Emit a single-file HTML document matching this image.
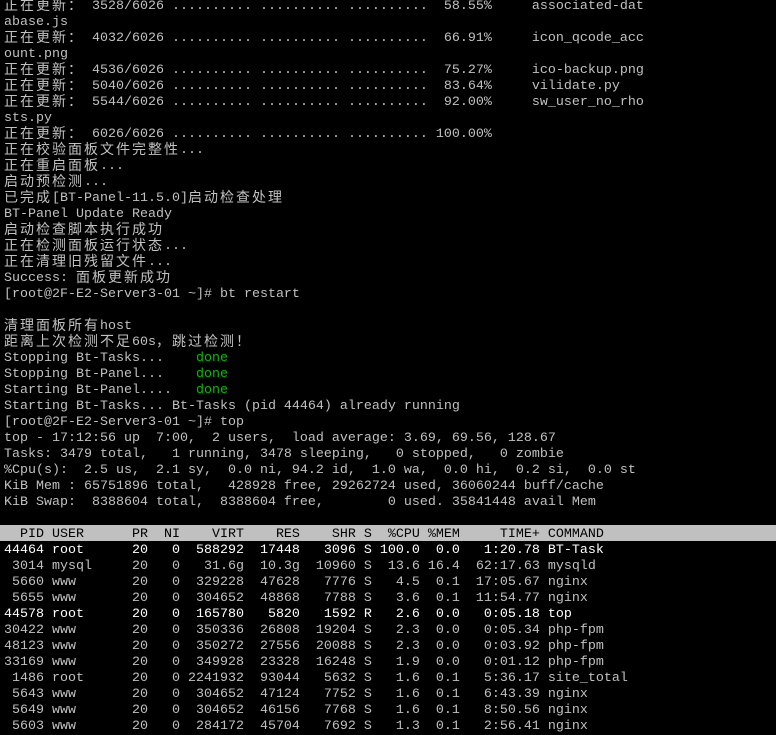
<!DOCTYPE html>
<html><head><meta charset="utf-8"><style>
html,body{margin:0;padding:0;background:#000;width:776px;height:731px;overflow:hidden}
#t{position:absolute;left:4px;top:-3px;font-family:"Liberation Mono",monospace;font-size:13.33px;color:#c0c0c0;}
#t div{height:14px;padding-top:2px;line-height:16px;white-space:pre;overflow:visible}
.c{font-family:"Noto Sans CJK SC","WenQuanYi Zen Hei",sans-serif;font-size:14px;letter-spacing:2px;line-height:15px;display:inline-block;height:16px;vertical-align:top;margin-top:-1px}
.g{color:#00c000}
.w{color:#fff}
.h{background:#c0c0c0;color:#000;margin-left:-4px;padding-left:4px;width:772px}
</style></head><body><div id="t">
<div><span class="c">正在更新：</span> 3528/6026 .......... .......... ..........  58.55%     associated-dat</div>
<div>abase.js</div>
<div><span class="c">正在更新：</span> 4032/6026 .......... .......... ..........  66.91%     icon_qcode_acc</div>
<div>ount.png</div>
<div><span class="c">正在更新：</span> 4536/6026 .......... .......... ..........  75.27%     ico-backup.png</div>
<div><span class="c">正在更新：</span> 5040/6026 .......... .......... ..........  83.64%     vilidate.py</div>
<div><span class="c">正在更新：</span> 5544/6026 .......... .......... ..........  92.00%     sw_user_no_rho</div>
<div>sts.py</div>
<div><span class="c">正在更新：</span> 6026/6026 .......... .......... .......... 100.00%</div>
<div><span class="c">正在校验面板文件完整性</span>...</div>
<div><span class="c">正在重启面板</span>...</div>
<div><span class="c">启动预检测</span>...</div>
<div><span class="c">已完成</span>[BT-Panel-11.5.0]<span class="c">启动检查处理</span></div>
<div>BT-Panel Update Ready</div>
<div><span class="c">启动检查脚本执行成功</span></div>
<div><span class="c">正在检测面板运行状态</span>...</div>
<div><span class="c">正在清理旧残留文件</span>...</div>
<div>Success: <span class="c">面板更新成功</span></div>
<div>[root@2F-E2-Server3-01 ~]# bt restart</div>
<div> </div>
<div><span class="c">清理面板所有</span>host</div>
<div><span class="c">距离上次检测不足</span>60s<span class="c">，跳过检测！</span></div>
<div>Stopping Bt-Tasks...    <span class="g">done</span></div>
<div>Stopping Bt-Panel...    <span class="g">done</span></div>
<div>Starting Bt-Panel....   <span class="g">done</span></div>
<div>Starting Bt-Tasks... Bt-Tasks (pid 44464) already running</div>
<div>[root@2F-E2-Server3-01 ~]# top</div>
<div>top - 17:12:56 up  7:00,  2 users,  load average: 3.69, 69.56, 128.67</div>
<div>Tasks: 3479 total,   1 running, 3478 sleeping,   0 stopped,   0 zombie</div>
<div>%Cpu(s):  2.5 us,  2.1 sy,  0.0 ni, 94.2 id,  1.0 wa,  0.0 hi,  0.2 si,  0.0 st</div>
<div>KiB Mem : 65751896 total,   428928 free, 29262724 used, 36060244 buff/cache</div>
<div>KiB Swap:  8388604 total,  8388604 free,        0 used. 35841448 avail Mem</div>
<div> </div>
<div class="h">  PID USER      PR  NI    VIRT    RES    SHR S  %CPU %MEM     TIME+ COMMAND</div>
<div class="w">44464 root      20   0  588292  17448   3096 S 100.0  0.0   1:20.78 BT-Task</div>
<div> 3014 mysql     20   0   31.6g  10.3g  10960 S  13.6 16.4  62:17.63 mysqld</div>
<div> 5660 www       20   0  329228  47628   7776 S   4.5  0.1  17:05.67 nginx</div>
<div> 5655 www       20   0  304652  48868   7788 S   3.6  0.1  11:54.77 nginx</div>
<div class="w">44578 root      20   0  165780   5820   1592 R   2.6  0.0   0:05.18 top</div>
<div>30422 www       20   0  350336  26808  19204 S   2.3  0.0   0:05.34 php-fpm</div>
<div>48123 www       20   0  350272  27556  20088 S   2.3  0.0   0:03.92 php-fpm</div>
<div>33169 www       20   0  349928  23328  16248 S   1.9  0.0   0:01.12 php-fpm</div>
<div> 1486 root      20   0 2241932  93044   5632 S   1.6  0.1   5:36.17 site_total</div>
<div> 5643 www       20   0  304652  47124   7752 S   1.6  0.1   6:43.39 nginx</div>
<div> 5649 www       20   0  304652  46156   7768 S   1.6  0.1   8:50.56 nginx</div>
<div> 5603 www       20   0  284172  45704   7692 S   1.3  0.1   2:56.41 nginx</div>
</div></body></html>
